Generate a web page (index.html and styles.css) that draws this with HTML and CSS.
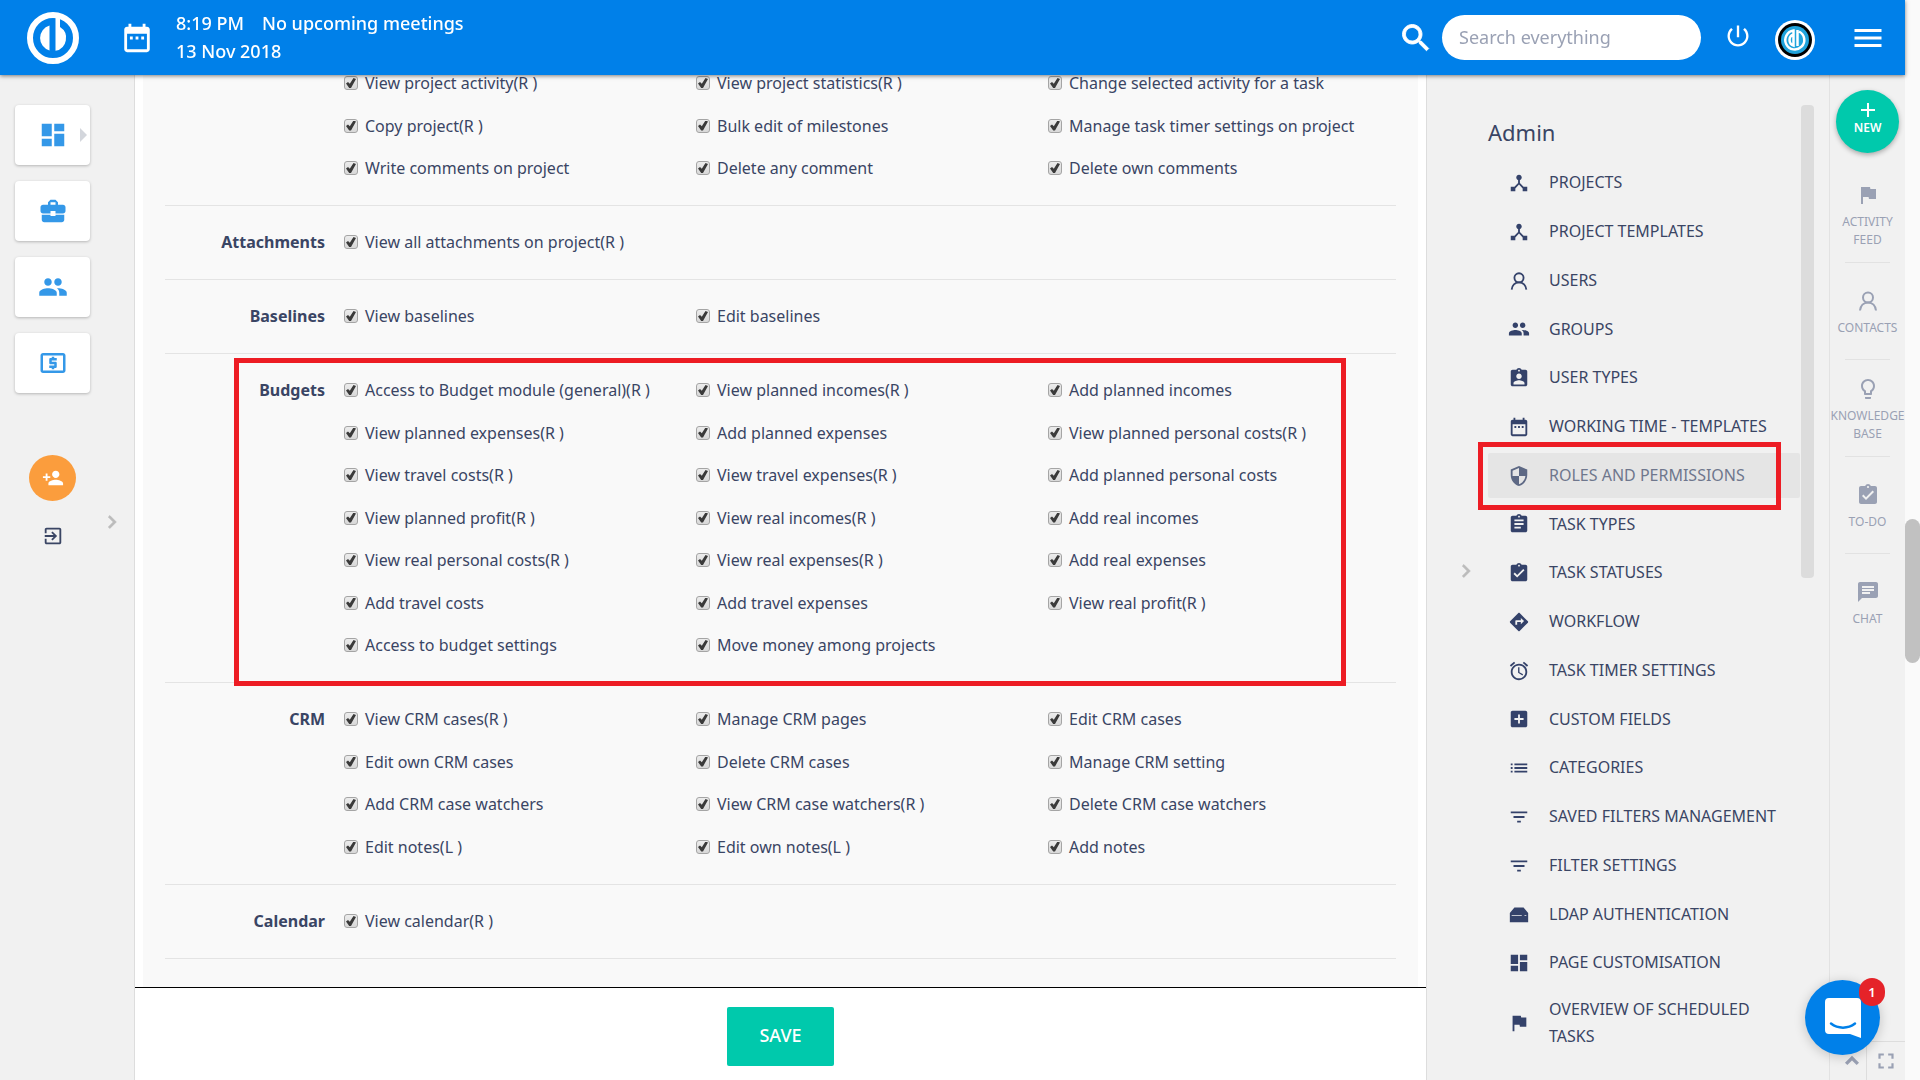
FILE: index.html
```
<!DOCTYPE html>
<html lang="en">
<head>
<meta charset="utf-8">
<meta name="viewport" content="width=device-width, initial-scale=1">
<title>Roles and permissions</title>
<link rel="stylesheet" href="styles.css">
</head>
<body>
<svg class="sprite" aria-hidden="true">
  <symbol id="hub" viewBox="0 0 24 24"><path d="M17 16l-4-4V8.820C14.160 8.400 15 7.300 15 6c0-1.660-1.340-3-3-3S9 4.340 9 6c0 1.300.84 2.400 2 2.820V12l-4 4H3v5h5v-3.050l4-4.200 4 4.200V21h5v-5h-4z"/></symbol>
  <symbol id="user" viewBox="0 0 24 24"><g fill="none" stroke="currentColor" stroke-width="2"><circle cx="12" cy="8.5" r="5"/><path d="M4 21.500c.5-4.500 3.500-8 8-8s7.500 3.500 8 8"/></g></symbol>
  <symbol id="group" viewBox="0 0 24 24"><path d="M16 11c1.660 0 2.990-1.340 2.990-3S17.660 5 16 5c-1.660 0-3 1.340-3 3s1.340 3 3 3zm-8 0c1.660 0 2.990-1.340 2.990-3S9.660 5 8 5C6.340 5 5 6.340 5 8s1.340 3 3 3zm0 2c-2.330 0-7 1.170-7 3.500V19h14v-2.500c0-2.330-4.670-3.500-7-3.500zm8 0c-.29 0-.62.02-.97.05 1.160.84 1.970 1.970 1.970 3.450V19h6v-2.500c0-2.330-4.670-3.500-7-3.500z"/></symbol>
  <symbol id="badge" viewBox="0 0 24 24"><path d="M19 3h-4.180C14.400 1.840 13.300 1 12 1c-1.300 0-2.400.84-2.820 2H5c-1.100 0-2 .9-2 2v14c0 1.100.9 2 2 2h14c1.100 0 2-.9 2-2V5c0-1.100-.9-2-2-2zm-7 0c.55 0 1 .45 1 1s-.45 1-1 1-1-.45-1-1 .45-1 1-1zm0 4c1.660 0 3 1.340 3 3s-1.340 3-3 3-3-1.340-3-3 1.340-3 3-3zm6 12H6v-1.400c0-2 4-3.100 6-3.100s6 1.100 6 3.100V19z"/></symbol>
  <symbol id="calendar" viewBox="0 0 24 24"><path d="M9 11H7v2h2v-2zm4 0h-2v2h2v-2zm4 0h-2v2h2v-2zm2-7h-1V2h-2v2H8V2H6v2H5c-1.110 0-1.990.9-1.990 2L3 20c0 1.100.89 2 2 2h14c1.100 0 2-.9 2-2V6c0-1.100-.9-2-2-2zm0 16H5V9h14v11z"/></symbol>
  <symbol id="shield" viewBox="0 0 24 24"><path d="M12 1L3 5v6c0 5.550 3.840 10.740 9 12 5.160-1.260 9-6.450 9-12V5l-9-4zm0 10.990h7c-.53 4.120-3.280 7.790-7 8.940V12H5V6.300l7-3.110v8.800z"/></symbol>
  <symbol id="clipboard" viewBox="0 0 24 24"><path d="M19 3h-4.180C14.400 1.840 13.300 1 12 1c-1.300 0-2.400.84-2.820 2H5c-1.100 0-2 .9-2 2v14c0 1.100.9 2 2 2h14c1.100 0 2-.9 2-2V5c0-1.100-.9-2-2-2zm-7 0c.55 0 1 .45 1 1s-.45 1-1 1-1-.45-1-1 .45-1 1-1zm2 14H7v-2h7v2zm3-4H7v-2h10v2zm0-4H7V7h10v2z"/></symbol>
  <symbol id="done" viewBox="0 0 24 24"><path d="M19 3h-4.180C14.400 1.840 13.300 1 12 1c-1.300 0-2.400.84-2.820 2H5c-1.100 0-2 .9-2 2v14c0 1.100.9 2 2 2h14c1.100 0 2-.9 2-2V5c0-1.100-.9-2-2-2zm-7 0c.55 0 1 .45 1 1s-.45 1-1 1-1-.45-1-1 .45-1 1-1zm-2 14l-4-4 1.410-1.410L10 14.170l6.590-6.590L18 9l-8 8z"/></symbol>
  <symbol id="directions" viewBox="0 0 24 24"><path d="M21.710 11.290l-9-9c-.39-.39-1.020-.39-1.410 0l-9 9c-.39.39-.39 1.020 0 1.410l9 9c.39.39 1.020.39 1.410 0l9-9c.39-.38.39-1.010 0-1.410zM14 14.500V12h-4v3H8v-4c0-.55.45-1 1-1h5V7.500l3.500 3.500-3.500 3.500z"/></symbol>
  <symbol id="alarm" viewBox="0 0 24 24"><path d="M22 5.720l-4.600-3.860-1.290 1.530 4.600 3.860L22 5.720zM7.880 3.390L6.600 1.860 2 5.710l1.290 1.530 4.590-3.850zM12.500 8H11v6l4.750 2.850.75-1.230-4-2.370V8zM12 4c-4.970 0-9 4.030-9 9s4.020 9 9 9c4.970 0 9-4.030 9-9s-4.030-9-9-9zm0 16c-3.870 0-7-3.130-7-7s3.130-7 7-7 7 3.130 7 7-3.130 7-7 7z"/></symbol>
  <symbol id="addbox" viewBox="0 0 24 24"><path d="M19 3H5c-1.110 0-2 .9-2 2v14c0 1.100.89 2 2 2h14c1.100 0 2-.9 2-2V5c0-1.100-.9-2-2-2zm-2 10h-4v4h-2v-4H7v-2h4V7h2v4h4v2z"/></symbol>
  <symbol id="list" viewBox="0 0 24 24"><path d="M3 13h2v-2H3v2zm0 4h2v-2H3v2zm0-8h2V7H3v2zm4 4h14v-2H7v2zm0 4h14v-2H7v2zM7 7v2h14V7H7z"/></symbol>
  <symbol id="filter" viewBox="0 0 24 24"><path d="M10 18h4v-2h-4v2zM3 6v2h18V6H3zm3 7h12v-2H6v2z"/></symbol>
  <symbol id="drive" viewBox="0 0 24 24"><path d="M7 5h10l5 6v10H2V11zM4 13v1h11v-1zm14 0v1h2v-1z" fill-rule="evenodd"/></symbol>
  <symbol id="dashboard" viewBox="0 0 24 24"><path d="M3 13h8V3H3v10zm0 8h8v-6H3v6zm10 0h8V11h-8v10zm0-18v6h8V3h-8z"/></symbol>
  <symbol id="flag" viewBox="0 0 24 24"><path d="M14.400 6L14 4H5v17h2v-7h5.600l.4 2h7V6z"/></symbol>
  <symbol id="bulb" viewBox="0 0 24 24"><path d="M9 21c0 .55.45 1 1 1h4c.55 0 1-.45 1-1v-1H9v1zm3-19C8.140 2 5 5.140 5 9c0 2.380 1.190 4.470 3 5.740V17c0 .55.45 1 1 1h6c.55 0 1-.45 1-1v-2.260c1.810-1.270 3-3.360 3-5.740 0-3.860-3.140-7-7-7zm2.850 11.100l-.85.6V16h-4v-2.300l-.85-.6C7.800 12.160 7 10.630 7 9c0-2.760 2.240-5 5-5s5 2.240 5 5c0 1.630-.8 3.160-2.150 4.100z"/></symbol>
  <symbol id="chat" viewBox="0 0 24 24"><path d="M20 2H4c-1.100 0-1.990.9-1.990 2L2 22l4-4h14c1.100 0 2-.9 2-2V4c0-1.100-.9-2-2-2zM6 9h12v2H6V9zm8 5H6v-2h8v2zm4-6H6V6h12v2z"/></symbol>
  <symbol id="search" viewBox="0 0 24 24"><path d="M15.500 14h-.79l-.28-.27C15.410 12.590 16 11.110 16 9.500 16 5.910 13.090 3 9.500 3S3 5.910 3 9.500 5.910 16 9.500 16c1.610 0 3.090-.59 4.230-1.570l.27.28v.79l5 4.990L20.490 19l-4.990-5zm-6 0C7.010 14 5 11.990 5 9.500S7.010 5 9.500 5 14 7.010 14 9.500 11.990 14 9.500 14z" stroke="currentColor" stroke-width=".6"/></symbol>
  <symbol id="power" viewBox="0 0 24 24"><path d="M13 3h-2v10h2V3zm4.830 2.170l-1.420 1.420C17.990 7.860 19 9.810 19 12c0 3.870-3.130 7-7 7s-7-3.130-7-7c0-2.190 1.010-4.140 2.580-5.420L6.170 5.170C4.230 6.820 3 9.260 3 12c0 4.970 4.030 9 9 9s9-4.030 9-9c0-2.740-1.230-5.180-3.170-6.830z"/></symbol>
  <symbol id="menu" viewBox="0 0 24 24"><path d="M3 18h18v-2H3v2zm0-5h18v-2H3v2zm0-7v2h18V6H3z"/></symbol>
  <symbol id="briefcase" viewBox="0 0 24 24"><path d="M10 16v-1H3.010L3 19c0 1.110.89 2 2 2h14c1.110 0 2-.89 2-2v-4h-7v1h-4zm10-9h-4.010V5l-2-2h-4l-2 2v2H4c-1.100 0-2 .9-2 2v3c0 1.110.89 2 2 2h6v-2h4v2h6c1.100 0 2-.9 2-2V9c0-1.100-.9-2-2-2zm-6 0h-4V5h4v2z"/></symbol>
  <symbol id="money" viewBox="0 0 24 24"><path d="M11 17h2v-1h1c.55 0 1-.45 1-1v-3c0-.55-.45-1-1-1h-3v-1h4V8h-2V7h-2v1h-1c-.55 0-1 .45-1 1v3c0 .55.45 1 1 1h3v1H9v2h2v1zm9-13H4c-1.110 0-1.990.89-1.990 2L2 18c0 1.110.89 2 2 2h16c1.110 0 2-.89 2-2V6c0-1.110-.89-2-2-2zm0 14H4V6h16v12z"/></symbol>
  <symbol id="adduser" viewBox="0 0 24 24"><path d="M15 12c2.210 0 4-1.790 4-4s-1.790-4-4-4-4 1.790-4 4 1.790 4 4 4zm-9-2V7H4v3H1v2h3v3h2v-3h3v-2H6zm9 4c-2.670 0-8 1.340-8 4v2h16v-2c0-2.660-5.330-4-8-4z"/></symbol>
  <symbol id="exit" viewBox="0 0 24 24"><path d="M10.090 15.590L11.500 17l5-5-5-5-1.410 1.410L12.670 11H3v2h9.670l-2.580 2.590zM19 3H5c-1.110 0-2 .9-2 2v4h2V5h14v14H5v-4H3v4c0 1.100.89 2 2 2h14c1.100 0 2-.9 2-2V5c0-1.100-.9-2-2-2z"/></symbol>
  <symbol id="chevron" viewBox="0 0 24 24"><path d="M10 6L8.590 7.410 13.170 12l-4.580 4.590L10 18l6-6z" stroke="currentColor" stroke-width=".6"/></symbol>
  <symbol id="up" viewBox="0 0 24 24"><path d="M5 15.500l7-7 7 7" fill="none" stroke="currentColor" stroke-width="4"/></symbol>
  <symbol id="fullscreen" viewBox="0 0 24 24"><path d="M7 14H5v5h5v-2H7v-3zm-2-4h2V7h3V5H5v5zm12 7h-3v2h5v-5h-2v3zM14 5v2h3v3h2V5h-5z"/></symbol>
  <symbol id="plus" viewBox="0 0 24 24"><path d="M19 13h-6v6h-2v-6H5v-2h6V5h2v6h6v2z"/></symbol>
</svg>

<header class="topbar">
  <a class="logo" href="#" aria-label="Home">
    <svg viewBox="0 0 52 52"><circle cx="26" cy="26" r="23" fill="none" stroke="currentColor" stroke-width="6"/><path d="M22.500 13.500A13 13 0 0 0 22.500 38.500zM28.500 5v33.760A13 13 0 0 0 33 15V5z"/></svg>
  </a>
  <svg class="icon icon-date" aria-hidden="true"><use href="#calendar"/></svg>
  <div class="agenda">
    <p><span>8:19 PM</span><span>No upcoming meetings</span></p>
    <p>13 Nov 2018</p>
  </div>
  <form class="search" role="search">
    <svg class="icon icon-search" aria-hidden="true"><use href="#search"/></svg>
    <input type="search" placeholder="Search everything" aria-label="Search everything">
  </form>
  <button class="plain power" type="button" aria-label="Sign out"><svg class="icon"><use href="#power"/></svg></button>
  <a class="avatar" href="#" aria-label="Profile">
    <svg viewBox="0 0 40 40"><circle cx="20" cy="20" r="20" fill="#fff"/><circle cx="20" cy="20" r="17" fill="#000"/><circle cx="20" cy="20" r="14" fill="#1fa3dc"/><path d="M24 11.500A9.500 9.500 0 1 1 18.500 10.600V25.500A5.800 5.800 0 0 1 18.500 14.500M22.500 10v16" fill="none" stroke="#fff" stroke-width="2.500"/></svg>
  </a>
  <button class="plain burger" type="button" aria-label="Menu"><svg class="icon"><use href="#menu"/></svg></button>
</header>

<div class="page">
  <nav class="sidebar" aria-label="Modules">
    <div class="tiles">
      <a class="tile tile-open" href="#" aria-label="Dashboard"><svg class="icon"><use href="#dashboard"/></svg></a>
      <a class="tile" href="#" aria-label="Projects"><svg class="icon"><use href="#briefcase"/></svg></a>
      <a class="tile" href="#" aria-label="People"><svg class="icon"><use href="#group"/></svg></a>
      <a class="tile" href="#" aria-label="Budgets"><svg class="icon"><use href="#money"/></svg></a>
      <a class="invite" href="#" aria-label="Invite user"><svg class="icon"><use href="#adduser"/></svg></a>
      <a class="leave" href="#" aria-label="Leave"><svg class="icon"><use href="#exit"/></svg></a>
    </div>
    <button class="plain toggle" type="button" aria-label="Expand sidebar"><svg class="icon"><use href="#chevron"/></svg></button>
  </nav>

  <form class="main">
    <div class="permissions">
      <section class="group" aria-label="Project">
        <h3></h3>
        <div class="checks">
          <label><input type="checkbox" checked>View project activity(R )</label>
          <label><input type="checkbox" checked>View project statistics(R )</label>
          <label><input type="checkbox" checked>Change selected activity for a task</label>
          <label><input type="checkbox" checked>Copy project(R )</label>
          <label><input type="checkbox" checked>Bulk edit of milestones</label>
          <label><input type="checkbox" checked>Manage task timer settings on project</label>
          <label><input type="checkbox" checked>Write comments on project</label>
          <label><input type="checkbox" checked>Delete any comment</label>
          <label><input type="checkbox" checked>Delete own comments</label>
        </div>
      </section>
      <section class="group">
        <h3>Attachments</h3>
        <div class="checks">
          <label><input type="checkbox" checked>View all attachments on project(R )</label>
        </div>
      </section>
      <section class="group">
        <h3>Baselines</h3>
        <div class="checks">
          <label><input type="checkbox" checked>View baselines</label>
          <label><input type="checkbox" checked>Edit baselines</label>
        </div>
      </section>
      <section class="group marked">
        <h3>Budgets</h3>
        <div class="checks">
          <label><input type="checkbox" checked>Access to Budget module (general)(R )</label>
          <label><input type="checkbox" checked>View planned incomes(R )</label>
          <label><input type="checkbox" checked>Add planned incomes</label>
          <label><input type="checkbox" checked>View planned expenses(R )</label>
          <label><input type="checkbox" checked>Add planned expenses</label>
          <label><input type="checkbox" checked>View planned personal costs(R )</label>
          <label><input type="checkbox" checked>View travel costs(R )</label>
          <label><input type="checkbox" checked>View travel expenses(R )</label>
          <label><input type="checkbox" checked>Add planned personal costs</label>
          <label><input type="checkbox" checked>View planned profit(R )</label>
          <label><input type="checkbox" checked>View real incomes(R )</label>
          <label><input type="checkbox" checked>Add real incomes</label>
          <label><input type="checkbox" checked>View real personal costs(R )</label>
          <label><input type="checkbox" checked>View real expenses(R )</label>
          <label><input type="checkbox" checked>Add real expenses</label>
          <label><input type="checkbox" checked>Add travel costs</label>
          <label><input type="checkbox" checked>Add travel expenses</label>
          <label><input type="checkbox" checked>View real profit(R )</label>
          <label><input type="checkbox" checked>Access to budget settings</label>
          <label><input type="checkbox" checked>Move money among projects</label>
        </div>
      </section>
      <section class="group">
        <h3>CRM</h3>
        <div class="checks">
          <label><input type="checkbox" checked>View CRM cases(R )</label>
          <label><input type="checkbox" checked>Manage CRM pages</label>
          <label><input type="checkbox" checked>Edit CRM cases</label>
          <label><input type="checkbox" checked>Edit own CRM cases</label>
          <label><input type="checkbox" checked>Delete CRM cases</label>
          <label><input type="checkbox" checked>Manage CRM setting</label>
          <label><input type="checkbox" checked>Add CRM case watchers</label>
          <label><input type="checkbox" checked>View CRM case watchers(R )</label>
          <label><input type="checkbox" checked>Delete CRM case watchers</label>
          <label><input type="checkbox" checked>Edit notes(L )</label>
          <label><input type="checkbox" checked>Edit own notes(L )</label>
          <label><input type="checkbox" checked>Add notes</label>
        </div>
      </section>
      <section class="group">
        <h3>Calendar</h3>
        <div class="checks">
          <label><input type="checkbox" checked>View calendar(R )</label>
        </div>
      </section>
    </div>
    <div class="actions"><button class="save" type="submit">SAVE</button></div>
  </form>

  <aside class="admin">
    <button class="plain toggle" type="button" aria-label="Collapse panel"><svg class="icon"><use href="#chevron"/></svg></button>
    <nav class="admin-nav" aria-labelledby="admin-title">
      <h2 id="admin-title">Admin</h2>
      <ul>
        <li><a href="#"><svg class="icon"><use href="#hub"/></svg>PROJECTS</a></li>
        <li><a href="#"><svg class="icon"><use href="#hub"/></svg>PROJECT TEMPLATES</a></li>
        <li><a href="#"><svg class="icon"><use href="#user"/></svg>USERS</a></li>
        <li><a href="#"><svg class="icon"><use href="#group"/></svg>GROUPS</a></li>
        <li><a href="#"><svg class="icon"><use href="#badge"/></svg>USER TYPES</a></li>
        <li><a href="#"><svg class="icon"><use href="#calendar"/></svg>WORKING TIME - TEMPLATES</a></li>
        <li class="current"><a href="#" aria-current="page"><svg class="icon"><use href="#shield"/></svg>ROLES AND PERMISSIONS</a></li>
        <li><a href="#"><svg class="icon"><use href="#clipboard"/></svg>TASK TYPES</a></li>
        <li><a href="#"><svg class="icon"><use href="#done"/></svg>TASK STATUSES</a></li>
        <li><a href="#"><svg class="icon"><use href="#directions"/></svg>WORKFLOW</a></li>
        <li><a href="#"><svg class="icon"><use href="#alarm"/></svg>TASK TIMER SETTINGS</a></li>
        <li><a href="#"><svg class="icon"><use href="#addbox"/></svg>CUSTOM FIELDS</a></li>
        <li><a href="#"><svg class="icon"><use href="#list"/></svg>CATEGORIES</a></li>
        <li><a href="#"><svg class="icon"><use href="#filter"/></svg>SAVED FILTERS MANAGEMENT</a></li>
        <li><a href="#"><svg class="icon"><use href="#filter"/></svg>FILTER SETTINGS</a></li>
        <li><a href="#"><svg class="icon"><use href="#drive"/></svg>LDAP AUTHENTICATION</a></li>
        <li><a href="#"><svg class="icon"><use href="#dashboard"/></svg>PAGE CUSTOMISATION</a></li>
        <li><a href="#"><svg class="icon"><use href="#flag"/></svg>OVERVIEW OF SCHEDULED TASKS</a></li>
      </ul>
    </nav>
    <div class="admin-scroll"></div>
  </aside>

  <aside class="rail">
    <button class="new" type="button"><svg class="icon"><use href="#plus"/></svg>NEW</button>
    <ul>
      <li><a href="#"><svg class="icon"><use href="#flag"/></svg>ACTIVITY FEED</a></li>
      <li><a href="#"><svg class="icon"><use href="#user"/></svg>CONTACTS</a></li>
      <li><a href="#"><svg class="icon"><use href="#bulb"/></svg>KNOWLEDGE BASE</a></li>
      <li><a href="#"><svg class="icon"><use href="#done"/></svg>TO-DO</a></li>
      <li><a href="#"><svg class="icon"><use href="#chat"/></svg>CHAT</a></li>
    </ul>
    <div class="rail-foot">
      <button class="plain" type="button" aria-label="Back to top"><svg class="icon icon-up"><use href="#up"/></svg></button>
      <button class="plain" type="button" aria-label="Full screen"><svg class="icon icon-full"><use href="#fullscreen"/></svg></button>
    </div>
  </aside>
</div>

<div class="scrollbar"><div class="thumb"></div></div>

<button class="messenger" type="button" aria-label="Messages">
  <svg viewBox="0 0 36 40"><path d="M4 0h28a4 4 0 0 1 4 4v36l-11-4H4a4 4 0 0 1-4-4V4a4 4 0 0 1 4-4z" fill="#fff"/><path d="M6 25.500c7 5.500 17 5.500 24 0" fill="none" stroke="#0080e9" stroke-width="2.500" stroke-linecap="round"/></svg>
  <span class="count">1</span>
</button>
</body>
</html>
```
FILE: styles.css
```
* { box-sizing: border-box; }

body {
  margin: 0;
  height: 100vh;
  overflow: hidden;
  display: flex;
  background: #fff;
  color: #3a4564;
  font: 16px/24px "Noto Sans", "Open Sans", sans-serif;
}

h2, h3, p, ul { margin: 0; padding: 0; }
ul { list-style: none; }
a { color: inherit; text-decoration: none; }
button, input { font: inherit; }

.sprite { position: absolute; width: 0; height: 0; }
.icon { display: block; flex: none; width: 24px; height: 24px; fill: currentColor; }
.plain { display: flex; align-items: center; justify-content: center; padding: 0; border: 0; background: none; color: inherit; }

/* Top bar */
.topbar {
  position: fixed;
  top: 0;
  left: 0;
  right: 15px;
  z-index: 2;
  display: flex;
  align-items: center;
  height: 75px;
  padding: 0 19px 0 27px;
  background: #0080e9;
  color: #fff;
  box-shadow: 0 1px 4px rgba(0, 0, 0, .5);
}
.logo svg { display: block; width: 52px; height: 52px; fill: currentColor; }
.icon-date { width: 34px; height: 34px; margin: 0 22px 0 41px; }
.agenda { padding-bottom: 2px; font-size: 18px; line-height: 28px; font-weight: 500; }
.agenda p { display: flex; gap: 18px; }
.search { display: flex; align-items: center; gap: 8px; margin-left: auto; }
.icon-search { width: 36px; height: 36px; }
.search input {
  width: 259px;
  height: 45px;
  padding: 0 17px 2px;
  border: 0;
  border-radius: 23px;
  background: #fff;
  font-size: 18px;
  outline: 0;
}
.search input::placeholder { color: #9aa1b4; opacity: 1; }
.power { margin: 0 23px 0 23px; padding-bottom: 4px; }
.power .icon { width: 28px; height: 28px; }
.avatar { padding-top: 4px; }
.avatar svg { display: block; width: 40px; height: 40px; }
.burger { margin-left: 35px; }
.burger .icon { width: 36px; height: 36px; }

/* Columns */
.page { display: flex; flex: 1; min-width: 0; }

.sidebar {
  display: flex;
  justify-content: space-between;
  width: 135px;
  padding: 105px 9px 0 15px;
  border-right: 1px solid #ddd;
  background: #f1f1f1;
}
.tiles { display: flex; flex-direction: column; align-items: center; gap: 16px; }
.tile {
  position: relative;
  display: flex;
  align-items: center;
  justify-content: center;
  width: 75px;
  height: 60px;
  border-radius: 4px;
  background: #fff;
  color: #3498e8;
  box-shadow: 0 1px 3px rgba(0, 0, 0, .25);
}
.tile .icon { width: 30px; height: 30px; }
.tile-open::after {
  content: "";
  position: absolute;
  right: 3px;
  border: 7px solid transparent;
  border-left-color: #d3d6dc;
  border-right: 0;
}
.invite {
  display: flex;
  align-items: center;
  justify-content: center;
  width: 47px;
  height: 46px;
  margin-top: 46px;
  border-radius: 50%;
  background: #fb9d3d;
  color: #fff;
}
.invite .icon { width: 22px; height: 22px; }
.leave { margin-top: 8px; }
.leave .icon { width: 22px; height: 22px; }
.toggle { color: #bbb; }
.toggle .icon { width: 26px; height: 26px; }
.sidebar .toggle { height: 834px; }

/* Permissions form */
.main { display: flex; flex: 1; flex-direction: column; min-width: 0; }
.permissions { flex: 1; overflow: hidden; margin: 0 8px; padding: 47px 22px 0; background: #f9f9f9; }
.group {
  position: relative;
  display: grid;
  grid-template-columns: 160px 1fr;
  column-gap: 19px;
  padding: 15px 0 16px;
  border-bottom: 1px solid #e4e4e4;
}
.group h3 { font-size: 16px; line-height: 42px; font-weight: 700; text-align: right; }
.checks {
  display: grid;
  grid-template-columns: repeat(3, 1fr);
  grid-auto-rows: 42px 43px;
  column-gap: 4px;
}
.checks label { display: flex; align-items: center; gap: 7px; white-space: nowrap; }
.checks input {
  appearance: none;
  display: grid;
  place-items: center;
  width: 14px;
  height: 14px;
  margin: 0;
  border: 1px solid #a5a5a5;
  border-radius: 3px;
  background: linear-gradient(#ececec, #d8d8d8);
}
.checks input:checked::before {
  content: "";
  width: 10px;
  height: 10px;
  background: #3a3a3a;
  clip-path: polygon(0 55%, 20% 40%, 38% 58%, 75% 0, 100% 10%, 50% 100%, 32% 100%);
}
.marked::after {
  content: "";
  position: absolute;
  inset: 4px 50px -4px 69px;
  z-index: 1;
  border: 5px solid #ed1c24;
}
.actions {
  display: flex;
  justify-content: center;
  height: 93px;
  padding: 19px 0 14px;
  border-top: 1px solid #000;
}
.save {
  width: 107px;
  height: 59px;
  padding: 0 0 4px;
  border: 0;
  border-radius: 2px;
  background: #00c9ac;
  color: #fff;
  font-size: 18px;
  font-weight: 500;
}

/* Admin panel */
.admin {
  display: flex;
  width: 403px;
  padding: 105px 15px 0 26px;
  border-left: 1px solid #ddd;
  background: #f1f1f1;
}
.admin .toggle { width: 26px; height: 932px; }
.admin-nav { flex: 1; margin-left: 9px; }
.admin-nav h2 { padding: 11px 0 10px; font-size: 22px; line-height: 32px; font-weight: 400; }
.admin-nav ul { display: grid; grid-auto-rows: minmax(49px, auto) minmax(49px, auto) minmax(49px, auto) minmax(48px, auto); }
.admin-nav li { position: relative; display: grid; align-items: center; }
.admin-nav a { display: flex; align-items: center; gap: 19px; padding: 9px 8px 9px 20px; line-height: 27px; border-radius: 2px; }
.admin-nav .icon { width: 22px; height: 22px; color: #34426a; }
.current a { background: #e5e5e5; color: #6f778d; }
.admin-nav .current .icon { color: #5d6884; }
.current::after {
  content: "";
  position: absolute;
  inset: -9px 19px -10px -10px;
  border: 5px solid #ed1c24;
}
.admin-scroll { width: 13px; height: 473px; margin-left: 1px; border-radius: 4px; background: #dcdcdc; }

/* Right rail */
.rail {
  display: flex;
  flex-direction: column;
  align-items: center;
  width: 76px;
  padding-top: 90px;
  border-left: 1px solid #e2e2e2;
  background: #f1f1f1;
  color: #9aa1b4;
  font-size: 12px;
  line-height: 18px;
}
.new {
  display: flex;
  flex-direction: column;
  align-items: center;
  justify-content: center;
  width: 63px;
  height: 63px;
  margin-bottom: 13px;
  padding: 0 0 11px;
  border: 0;
  border-radius: 50%;
  background: #00c9ac;
  color: #fff;
  line-height: 12px;
  font-weight: 600;
  box-shadow: 0 2px 5px rgba(0, 0, 0, .3);
}
.rail li { width: 75px; text-align: center; }
.rail li + li::before { content: ""; display: block; width: 45px; height: 1px; margin: 0 auto; background: #e2e2e2; }
.rail a { display: flex; flex-direction: column; align-items: center; justify-content: center; gap: 6px; height: 96px; padding-top: 4px; }
.rail-foot {
  display: grid;
  grid-template-columns: 36px 1fr;
  align-self: stretch;
  height: 39px;
  margin-top: auto;
  border-top: 1px solid #ddd;
}
.rail-foot .plain + .plain { border-left: 1px solid #ddd; }
.rail-foot .plain:first-child { justify-content: flex-end; padding-right: 4px; }
.icon-up { width: 20px; height: 20px; }
.icon-full { width: 26px; height: 26px; }

/* Window scrollbar */
.scrollbar { width: 15px; padding-top: 519px; background: #fafafa; }
.thumb { height: 144px; border-radius: 8px; background: #c1c1c1; }

/* Messenger launcher */
.messenger {
  position: fixed;
  right: 40px;
  bottom: 25px;
  z-index: 3;
  display: flex;
  align-items: center;
  justify-content: center;
  width: 75px;
  height: 75px;
  padding: 0;
  border: 0;
  border-radius: 50%;
  background: #0080e9;
  box-shadow: 0 2px 12px rgba(0, 0, 0, .2);
}
.messenger svg { width: 36px; height: 40px; }
.count {
  position: absolute;
  top: -2px;
  right: -5px;
  width: 26px;
  height: 28px;
  border-radius: 14px;
  background: #e52329;
  color: #fff;
  font-size: 13px;
  line-height: 28px;
  font-weight: 600;
}
```
